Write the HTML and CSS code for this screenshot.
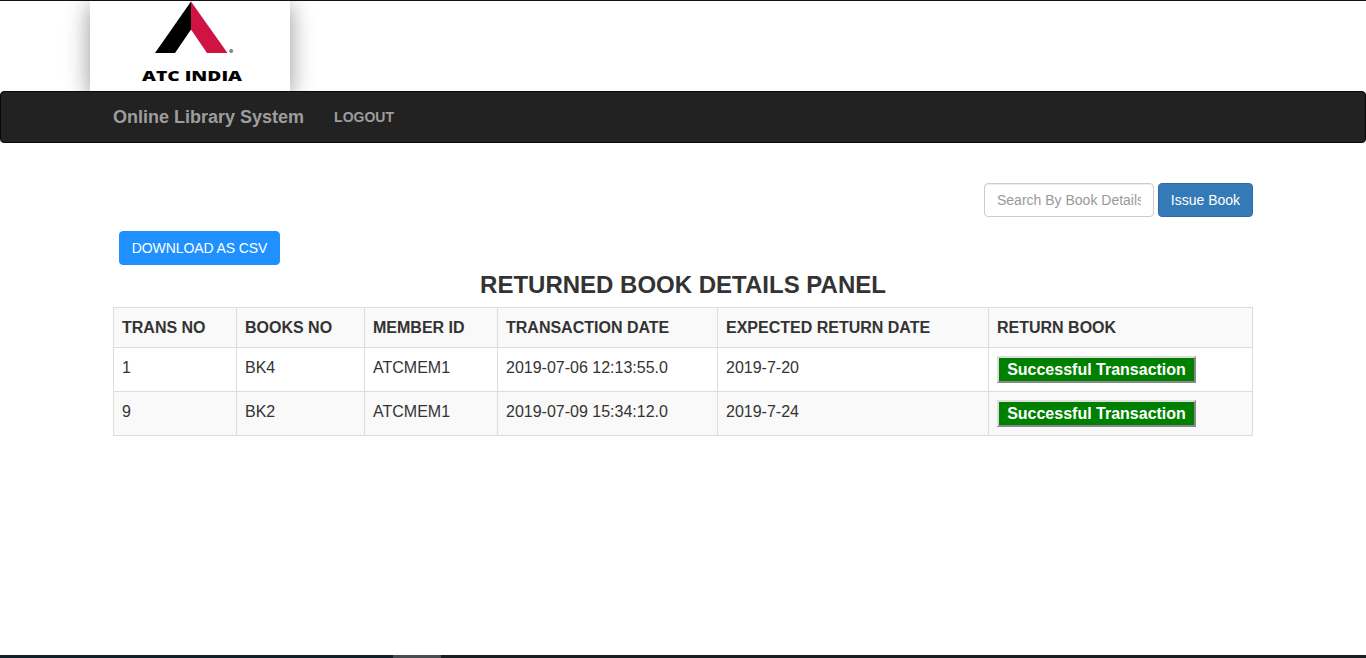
FILE: index.html
```html
<!DOCTYPE html>
<html lang="en">
<head>
<meta charset="utf-8">
<title>Online Library System</title>
<link rel="stylesheet" href="styles.css">
</head>
<body>
<header class="masthead">
  <div class="logo-card">
    <svg class="logo" width="200" height="90" viewBox="90 1 200 90" role="img" aria-label="ATC India">
      <path d="M191 1.5 L155 53 L175 53 L191 29.5 Z" fill="#000"/>
      <path d="M191 1.5 L227.5 53 L207 53 L191 29.5 Z" fill="#cf1443"/>
      <circle cx="231.2" cy="51" r="1.6" fill="#888" stroke="#777" stroke-width="0.8"/>
      <text class="logo-text" x="142" y="81" textLength="100" lengthAdjust="spacingAndGlyphs">ATC INDIA</text>
    </svg>
  </div>
</header>
<nav class="navbar">
  <a class="brand">Online Library System</a>
  <a class="nav-link">LOGOUT</a>
</nav>
<main class="container">
  <form class="search">
    <input class="search-input" type="text" placeholder="Search By Book Details">
    <button class="btn btn-primary" type="button">Issue Book</button>
  </form>
  <button class="btn btn-download" type="button">DOWNLOAD AS CSV</button>
  <h1 class="title">RETURNED BOOK DETAILS PANEL</h1>
  <table class="books">
    <colgroup><col class="c1"><col class="c2"><col class="c3"><col class="c4"><col class="c5"><col class="c6"></colgroup>
    <tr class="head"><th>TRANS NO</th><th>BOOKS NO</th><th>MEMBER ID</th><th>TRANSACTION DATE</th><th>EXPECTED RETURN DATE</th><th>RETURN BOOK</th></tr>
    <tr><td>1</td><td>BK4</td><td>ATCMEM1</td><td>2019-07-06 12:13:55.0</td><td>2019-7-20</td><td><button class="status" type="button">Successful Transaction</button></td></tr>
    <tr class="alt"><td>9</td><td>BK2</td><td>ATCMEM1</td><td>2019-07-09 15:34:12.0</td><td>2019-7-24</td><td><button class="status" type="button">Successful Transaction</button></td></tr>
  </table>
</main>
<footer class="taskbar"><span class="task-left"></span><span class="task-active"></span><span class="task-right"></span></footer>
</body>
</html>
```
FILE: styles.css
```css
* { box-sizing: border-box; }
body {
  margin: 0;
  height: 658px;
  display: flex;
  flex-direction: column;
  overflow: hidden;
  background: #fff;
  color: #333;
  font-family: "Liberation Sans", Arial, sans-serif;
  font-size: 14px;
}
.masthead {
  height: 91px;
  flex: none;
  border-top: 1px solid #111;
  padding-left: 90px;
  overflow: hidden;
}
.logo-card {
  width: 200px;
  height: 90px;
  background: #fff;
  box-shadow: 0 4px 20px 0 rgba(0,0,0,.3), 0 6px 30px 0 rgba(0,0,0,.15);
}
.logo { display: block; }
.logo-text { font: bold 13.5px "Open Sans", sans-serif; font-weight: 800; }
.navbar {
  height: 52px;
  flex: none;
  display: flex;
  align-items: center;
  gap: 30px;
  padding-left: 112px;
  background: #222;
  border: 1px solid #080808;
  border-radius: 4px;
  color: #9d9d9d;
  font-weight: bold;
}
.brand { font-size: 18px; line-height: 20px; }
.nav-link { font-size: 14px; line-height: 20px; }
.container {
  width: 1140px;
  margin-left: 113px;
  padding-top: 40px;
  flex: 1;
}
.search { display: flex; justify-content: flex-end; gap: 4px; }
.search-input {
  width: 170px;
  height: 34px;
  padding: 6px 12px;
  border: 1px solid #ccc;
  border-radius: 4px;
  box-shadow: inset 0 1px 1px rgba(0,0,0,.075);
  font: 14px/20px "Liberation Sans", Arial, sans-serif;
}
.search-input::placeholder { color: #999; opacity: 1; }
.btn {
  height: 34px;
  padding: 0;
  border: 1px solid;
  border-radius: 4px;
  color: #fff;
  font: 14px/20px "Liberation Sans", Arial, sans-serif;
}
.btn-primary { width: 95px; background: #337ab7; border-color: #2e6da4; }
.btn-download {
  display: block;
  width: 161px;
  margin: 14px 0 0 6px;
  background: #1e90ff;
  border-color: #1e90ff;
  letter-spacing: -.1px;
}
.title {
  margin: 6px 0 9px;
  text-align: center;
  font-size: 24px;
  line-height: 27px;
}
.books { width: 1140px; table-layout: fixed; border-collapse: collapse; font-size: 16px; }
.c1 { width: 123px; }
.c2 { width: 128px; }
.c3 { width: 133px; }
.c4 { width: 220px; }
.c5 { width: 271px; }
.books th, .books td {
  padding: 8px;
  border: 1px solid #ddd;
  line-height: 23px;
  text-align: left;
  vertical-align: top;
  white-space: nowrap;
}
.books tr { height: 44px; }
.books .head { height: 40px; }
.head, .alt { background: #f9f9f9; }
.status {
  display: block;
  width: 199px;
  height: 27px;
  padding: 0;
  border: 2px outset #ddd;
  background: #008000;
  color: #fff;
  font: bold 16px/22px "Liberation Sans", Arial, sans-serif;
}
.taskbar { height: 3px; flex: none; display: flex; background: #1d2326; }
.task-left { width: 393px; background: #10202a; }
.task-active { width: 48px; background: #454d51; }
.task-right { flex: 1; background: #171f22; }
```
